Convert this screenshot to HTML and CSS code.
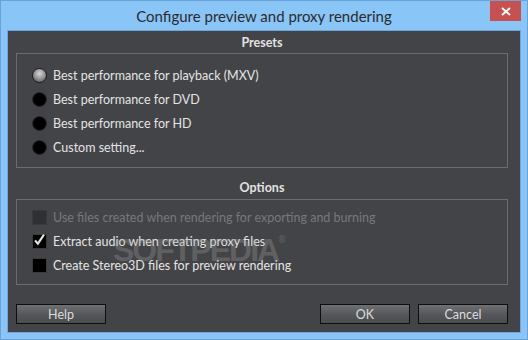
FILE: index.html
```html
<!DOCTYPE html>
<html lang="en">
  <head>
    <meta charset="UTF-8" />
    <title>Configure preview and proxy rendering</title>
    <link rel="stylesheet" href="styles.css">
  </head>
  <body>
    <div class="window">
      <div class="titlebar">
        <span class="title">Configure preview and proxy rendering</span>
        <div class="close">
          <svg width="10" height="9" viewBox="0 0 10 9">
            <path d="M1 1 L9 8 M9 1 L1 8" stroke="#fff" stroke-width="2" />
          </svg>
        </div>
      </div>
      <div class="client">
        <h5 class="legend">Presets</h5>
        <div class="group presets">
          <label class="row"><span class="radio on"></span>Best performance for playback (MXV)</label>
          <label class="row"><span class="radio"></span>Best performance for DVD</label>
          <label class="row"><span class="radio"></span>Best performance for HD</label>
          <label class="row"><span class="radio"></span>Custom setting...</label>
        </div>
        <h5 class="legend">Options</h5>
        <div class="group options">
          <label class="row disabled"><span class="check"></span>Use files created when rendering for exporting and burning</label>
          <label class="row"><span class="check">
            <svg width="16" height="16" viewBox="0 0 16 16">
              <path d="M2.5 8.5 L6 12.5 L13.5 1.5" fill="none" stroke="#e2e2e2" stroke-width="2.6" />
            </svg>
          </span>Extract audio when creating proxy files</label>
          <label class="row"><span class="check"></span>Create Stereo3D files for preview rendering</label>
        </div>
        <div class="buttons">
          <button class="btn">Help</button>
          <span class="spacer"></span>
          <button class="btn">OK</button>
          <button class="btn">Cancel</button>
        </div>
        <div class="mark">SOFTPEDIA<sup>®</sup></div>
      </div>
    </div>
  </body>
</html>
```
FILE: styles.css
```css
* {
  margin: 0;
  padding: 0;
  box-sizing: border-box;
}
body {
  font-family: Lato, "Open Sans", sans-serif;
  background: #8ac5f8;
}
.window {
  width: 528px;
  height: 340px;
  border: 1px solid #6ba3d8;
  background: #8ac5f8;
  display: flex;
  flex-direction: column;
}
.titlebar {
  height: 29px;
  display: flex;
  justify-content: center;
  align-items: center;
  position: relative;
}
.title {
  font-size: 15px;
  color: #2b2b2b;
  padding-top: 1px;
}
.close {
  position: absolute;
  top: 0;
  right: 6px;
  width: 31px;
  height: 20px;
  background: #c75050;
  display: flex;
  justify-content: center;
  align-items: center;
}
.client {
  flex: 1;
  margin: 0 6px 6px;
  border: 1px solid #72a6d8;
  background: #434447;
  padding: 0 12px 0 8px;
  display: flex;
  flex-direction: column;
  position: relative;
}
.legend {
  font-size: 12.5px;
  font-weight: bold;
  color: #e2e2e2;
  text-align: center;
  line-height: 14px;
}
.client > .legend:first-child {
  margin: 5px 0 3px;
}
.presets + .legend {
  margin: 13px 0 4px;
}
.group {
  border: 1px solid #6b6c6f;
  padding: 0 0 0 15px;
  display: flex;
  flex-direction: column;
}
.presets {
  height: 115px;
  padding-top: 9px;
}
.options {
  height: 86px;
  padding-top: 5px;
}
.row {
  display: flex;
  align-items: center;
  height: 24px;
  font-size: 12.5px;
  color: #e4e4e4;
}
.row.disabled {
  color: #77787b;
}
.radio {
  width: 15px;
  height: 15px;
  border-radius: 50%;
  background: #000;
  border: 1px solid #2a2a2a;
  margin-right: 6px;
}
.radio.on {
  background: radial-gradient(circle at 50% 35%, #d6d6d6 0, #9a9a9a 45%, #5a5a5a 90%);
  border-color: #1a1a1a;
}
.check {
  width: 15px;
  height: 15px;
  background: #000;
  border: 1px solid #3a3a3a;
  margin-right: 6px;
  display: flex;
  align-items: flex-end;
  justify-content: center;
  overflow: visible;
}
.disabled .check {
  background: #2f3033;
  border-color: #38393c;
}
.buttons {
  display: flex;
  gap: 8px;
  margin-top: auto;
  margin-bottom: 8px;
}
.spacer {
  flex: 1;
}
.btn {
  width: 90px;
  height: 20px;
  border: 1px solid #0e0e0e;
  background: linear-gradient(#6f7074, #55565a 55%, #4b4c50);
  color: #dcdcdc;
  font-family: inherit;
  font-size: 12.5px;
}
.mark {
  position: absolute;
  left: 105px;
  top: 190px;
  font-family: "Liberation Sans", sans-serif;
  font-weight: bold;
  font-size: 32px;
  line-height: 37px;
  letter-spacing: -2px;
  color: rgba(160, 160, 160, 0.32);
  pointer-events: none;
}
.mark sup {
  font-size: 10px;
  vertical-align: 18px;
  letter-spacing: 0;
}
```
